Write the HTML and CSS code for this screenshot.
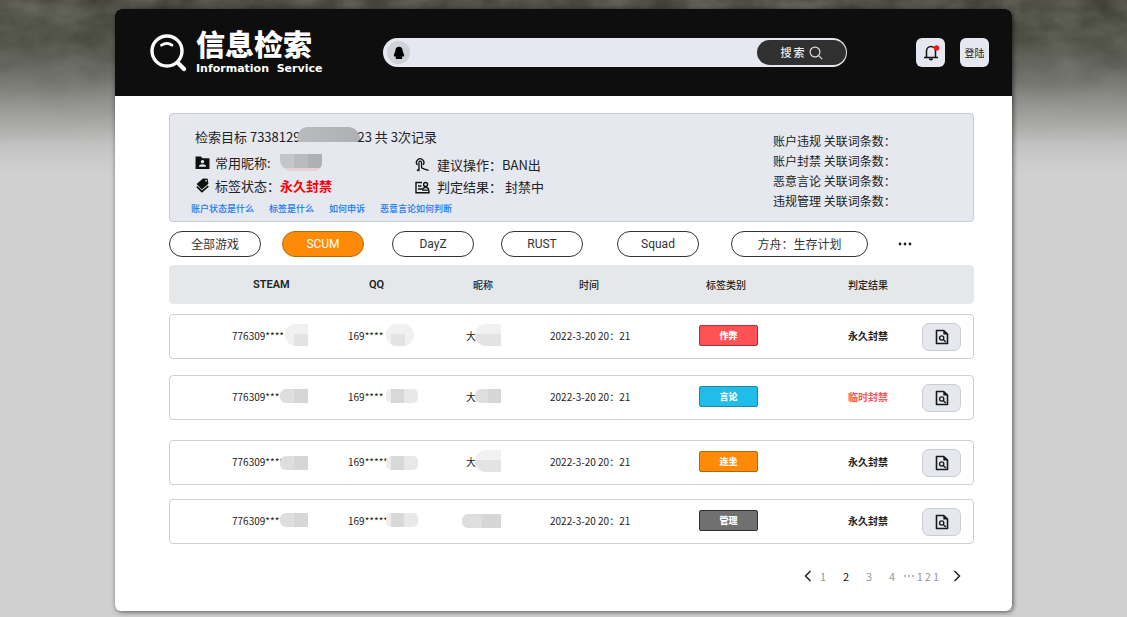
FILE: index.html
```html
<!DOCTYPE html>
<html lang="zh-CN">
<head>
<meta charset="utf-8">
<title>信息检索</title>
<link rel="stylesheet" href="styles.css">
</head>
<body>
<svg class="backdrop" aria-hidden="true">
  <defs>
    <filter id="ground" x="0" y="0" width="100%" height="100%" color-interpolation-filters="sRGB">
      <feTurbulence type="fractalNoise" baseFrequency="0.025 0.04" numOctaves="4" seed="8"/>
      <feColorMatrix values="0.3 0 0 0 0.18  0.3 0 0 0 0.18  0.3 0 0 0 0.14  0 0 0 0 1"/>
    </filter>
    <linearGradient id="fade" x1="0" y1="0" x2="0" y2="1">
      <stop offset="0" stop-color="#fff" stop-opacity=".8"/>
      <stop offset=".3" stop-color="#fff" stop-opacity=".45"/>
      <stop offset=".6" stop-color="#fff" stop-opacity=".12"/>
      <stop offset="1" stop-color="#fff" stop-opacity="0"/>
    </linearGradient>
    <mask id="ground-mask"><rect width="100%" height="160" fill="url(#fade)"/></mask>
  </defs>
  <rect width="100%" height="160" filter="url(#ground)" mask="url(#ground-mask)"/>
</svg>

<div class="card">
  <header class="header">
    <div class="brand">
      <svg class="brand-icon" viewBox="0 0 37 38" fill="none" stroke="#fff">
        <circle cx="17" cy="17" r="15" stroke-width="3.4"/>
        <path d="M27.5 28.500 34 35" stroke-width="4.200" stroke-linecap="round"/>
        <path d="M11.500 11.200q5.500-3.600 10.500 0" stroke-width="2.800" stroke-linecap="round"/>
      </svg>
      <div>
        <h1 class="brand-name">信息检索</h1>
        <p class="brand-sub">Information&nbsp; Service</p>
      </div>
    </div>
    <form class="search">
      <span class="search-kind">
        <svg width="12" height="14" viewBox="0 0 12 14"><path d="M6 .8c2.500 0 3.700 1.800 3.700 4.200 0 1.200 1.500 2.800 1.500 4.800 0 .9-.7 1-1.400.2-.1.900-.5 1.400-.9 1.800.6.400.6 1.200-.2 1.200H3.300c-.8 0-.8-.8-.2-1.200-.4-.4-.8-.9-.9-1.800-.7.800-1.400.7-1.400-.2 0-2 1.500-3.600 1.500-4.800C2.300 2.600 3.500.8 6 .8Z"/></svg>
      </span>
      <input class="search-input" type="text" aria-label="搜索">
      <button class="search-button" type="button">
        <span class="search-label">搜索</span>
        <svg width="14" height="14" viewBox="0 0 14 14" fill="none" stroke="#ddd" stroke-width="1.200"><circle cx="6" cy="6" r="4.900"/><path d="m9.600 9.600 3.600 3.600"/></svg>
      </button>
    </form>
    <div class="actions">
      <button class="action" type="button" aria-label="通知">
        <svg width="18" height="18" viewBox="0 0 18 18" fill="none" stroke="#111" stroke-width="1.500">
          <path d="M4.500 13.500V7a4.500 4.500 0 0 1 9 0v6.500M2 13.600h14"/>
          <path d="M6.800 14.600a2.200 2 0 0 0 4.400 0Z" fill="#111" stroke="none"/>
          <circle cx="14.600" cy="4" r="2.700" fill="#f5151b" stroke="none"/>
        </svg>
      </button>
      <button class="action" type="button">登陆</button>
    </div>
  </header>

  <main class="content">
    <section class="panel">
      <div class="panel-main">
        <p class="target">检索目标 7338129<span class="target-mask"></span>23 共 3次记录</p>
        <div class="facts">
          <ul class="fact-list">
            <li class="fact">
              <svg class="fact-icon" viewBox="0 0 14 14"><path fill="#111" fill-rule="evenodd" d="M.5 1.500h5l1.500 1.500h6.500v10H.5ZM7 4.600a1.600 1.600 0 1 0 .01 0ZM3.800 11h6.400V9.800Q7 7.600 3.800 9.800Z"/></svg>
              <span>常用昵称:</span><span class="name-mask"></span>
            </li>
            <li class="fact">
              <svg class="fact-icon" viewBox="0 0 14 16"><path fill="#111" d="M7.500.5 12.500.8 13.300 6 6.300 12.200.7 6.500Z"/><path d="M1 9.300 6.400 14.500 13.200 8.600" fill="none" stroke="#111" stroke-width="1.800"/><circle cx="10.800" cy="3" r=".9" fill="#e5e8ef"/></svg>
              <span>标签状态：</span><strong class="banned">永久封禁</strong>
            </li>
          </ul>
          <ul class="fact-list fact-list-end">
            <li class="fact">
              <svg class="fact-icon" viewBox="0 0 15 16" fill="none" stroke="#111" stroke-width="1.400"><path d="M2.200 7.500A3.900 3.900 0 1 1 8 7.300"/><path d="M3.700 14V4.800a1.400 1.400 0 0 1 2.800 0v5.600l3.200 1.400 4.300 1.400"/><path d="m3.700 12-2.200 1.500"/></svg>
              <span>建议操作：</span><span>BAN出</span>
            </li>
            <li class="fact">
              <svg class="fact-icon" viewBox="0 0 15 14" fill="none" stroke="#111" stroke-width="1.400"><path d="M7 2H1v10.300h13V10M3 5.500h3.500M3 8.500h4"/><circle cx="10.600" cy="4" r="2"/><path d="M7.800 9.600V8.300q2.800-3 5.700 0v1.300Z"/></svg>
              <span>判定结果：</span><span class="verdict">封禁中</span>
            </li>
          </ul>
        </div>
        <nav class="help">
          <a href="#">账户状态是什么</a><a href="#">标签是什么</a><a href="#">如何申诉</a><a href="#">恶意言论如何判断</a>
        </nav>
      </div>
      <ul class="counts">
        <li>账户违规 关联词条数：</li>
        <li>账户封禁 关联词条数：</li>
        <li>恶意言论 关联词条数：</li>
        <li>违规管理 关联词条数：</li>
      </ul>
    </section>

    <div class="filters">
      <button class="pill pill-wide" type="button">全部游戏</button>
      <button class="pill pill-active" type="button">SCUM</button>
      <button class="pill" type="button">DayZ</button>
      <button class="pill" type="button">RUST</button>
      <button class="pill" type="button">Squad</button>
      <button class="pill pill-long" type="button">方舟：生存计划</button>
      <button class="more" type="button" aria-label="更多"><svg width="14" height="4" viewBox="0 0 14 4" fill="#222"><circle cx="2" cy="2" r="1.400"/><circle cx="7" cy="2" r="1.400"/><circle cx="12" cy="2" r="1.400"/></svg></button>
    </div>

    <svg class="sprite" aria-hidden="true">
      <symbol id="inspect" viewBox="0 0 14 16"><path d="M1.500 1.500h7.200l3.800 3.600v9.400h-11Z" fill="none" stroke="#16191d" stroke-width="1.600" stroke-linejoin="round"/><path d="M8.300 1v4.500h4.500Z" fill="#16191d"/><circle cx="6.700" cy="9" r="2.100" fill="none" stroke="#16191d" stroke-width="1.400"/><path d="m8.200 10.500 2.600 2.600" stroke="#16191d" stroke-width="1.400"/></symbol>
    </svg>

    <table class="records">
      <thead>
        <tr class="head">
          <th>STEAM</th><th>QQ</th><th>昵称</th><th>时间</th><th>标签类别</th><th>判定结果</th>
        </tr>
      </thead>
      <tbody>
        <tr class="record">
          <td>776309****<span class="blot blot-steam blot-tall"></span></td>
          <td>169****<span class="blot blot-qq blot-tall"></span></td>
          <td>大<span class="blot blot-name blot-tall"></span></td>
          <td>2022-3-20 20：21</td>
          <td><span class="tag tag-cheat">作弊</span></td>
          <td class="result">永久封禁</td>
          <td><button class="inspect" type="button" aria-label="查看"><svg width="14" height="16"><use href="#inspect"/></svg></button></td>
        </tr>
        <tr class="record">
          <td>776309****<span class="blot blot-steam"></span></td>
          <td>169****<span class="blot blot-qq"></span></td>
          <td>大<span class="blot blot-name"></span></td>
          <td>2022-3-20 20：21</td>
          <td><span class="tag tag-speech">言论</span></td>
          <td class="result result-temp">临时封禁</td>
          <td><button class="inspect" type="button" aria-label="查看"><svg width="14" height="16"><use href="#inspect"/></svg></button></td>
        </tr>
        <tr class="record">
          <td>776309****<span class="blot blot-steam blot-low"></span></td>
          <td>169*****<span class="blot blot-qq blot-low"></span></td>
          <td>大<span class="blot blot-name blot-tall"></span></td>
          <td>2022-3-20 20：21</td>
          <td><span class="tag tag-linked">连坐</span></td>
          <td class="result">永久封禁</td>
          <td><button class="inspect" type="button" aria-label="查看"><svg width="14" height="16"><use href="#inspect"/></svg></button></td>
        </tr>
        <tr class="record">
          <td>776309****<span class="blot blot-steam"></span></td>
          <td>169*****<span class="blot blot-qq"></span></td>
          <td><span class="blot blot-full"></span></td>
          <td>2022-3-20 20：21</td>
          <td><span class="tag tag-admin">管理</span></td>
          <td class="result">永久封禁</td>
          <td><button class="inspect" type="button" aria-label="查看"><svg width="14" height="16"><use href="#inspect"/></svg></button></td>
        </tr>
      </tbody>
    </table>

    <nav class="pager" aria-label="分页">
      <a href="#" aria-label="上一页"><svg width="8" height="12" viewBox="0 0 8 12" fill="none" stroke="#222" stroke-width="1.500"><path d="M6.500 1 1.500 6l5 5"/></svg></a>
      <a class="page" href="#">1</a>
      <a class="page page-current" href="#">2</a>
      <a class="page" href="#">3</a>
      <a class="page" href="#">4</a>
      <span class="page-gap"><svg width="10" height="2" viewBox="0 0 10 2" fill="#999"><circle cx="1" cy="1" r=".9"/><circle cx="5" cy="1" r=".9"/><circle cx="9" cy="1" r=".9"/></svg></span>
      <a class="page-last" href="#">121</a>
      <a href="#" aria-label="下一页"><svg width="8" height="12" viewBox="0 0 8 12" fill="none" stroke="#222" stroke-width="1.500"><path d="m1.500 1 5 5-5 5"/></svg></a>
    </nav>
  </main>
</div>
</body>
</html>
```

FILE: styles.css
```css
* {
  box-sizing: border-box;
}

body {
  margin: 0;
  min-height: 100vh;
  padding: 9px 115px 5px;
  background: #d0d0d0 linear-gradient(#4c4d43 0, #55564e 40px, #80817c 80px, #a6a6a3 115px, #c6c6c6 145px, #d0d0d0 175px) no-repeat;
  color: #222;
  font-family: "Noto Sans CJK SC", sans-serif;
  font-size: 10px;
}

h1,
p,
ul {
  margin: 0;
  padding: 0;
  list-style: none;
}

button {
  padding: 0;
  border: 0;
  color: inherit;
  font: inherit;
  cursor: pointer;
}

a {
  color: inherit;
  text-decoration: none;
}

svg {
  display: block;
}

.backdrop {
  position: absolute;
  inset: 0;
  z-index: -1;
  width: 100%;
  height: 160px;
}

.sprite {
  position: absolute;
  width: 0;
  height: 0;
}

.card {
  border-radius: 6px;
  background: #fff;
  box-shadow: 1px 1px 5px rgba(0, 0, 0, .6);
  overflow: hidden;
}

.header {
  display: flex;
  align-items: center;
  height: 87px;
  padding: 0 23px 0 35px;
  background: #0e0e0e;
}

.brand {
  display: flex;
  flex: none;
  align-items: center;
  gap: 9px;
  width: 233px;
  color: #fff;
}

.brand-icon {
  width: 37px;
  height: 38px;
}

.brand-name {
  font-size: 29px;
  font-weight: 900;
  line-height: 26px;
}

.brand-sub {
  margin-top: 6px;
  font-family: "DejaVu Sans", sans-serif;
  font-size: 11px;
  font-weight: 700;
  line-height: 14px;
  white-space: nowrap;
}

.search {
  display: flex;
  flex: 1;
  align-items: center;
  height: 29px;
  padding: 0 1px 0 4px;
  border-radius: 15px;
  background: #e5e8f0;
}

.search-kind {
  display: grid;
  place-items: center;
  width: 23px;
  height: 23px;
  border-radius: 50%;
  background: #cfd2d7;
}

.search-input {
  flex: 1;
  min-width: 0;
  padding: 0 8px;
  border: 0;
  outline: 0;
  background: none;
  font: inherit;
}

.search-button {
  display: flex;
  align-items: center;
  justify-content: center;
  gap: 2px;
  width: 89px;
  height: 25px;
  border-radius: 13px;
  background: #303030;
  color: #eee;
  font-size: 11px;
  font-weight: 500;
}

.search-label {
  padding-bottom: 1px;
  letter-spacing: 2px;
}

.actions {
  display: flex;
  gap: 15px;
  margin-left: 69px;
}

.action {
  display: grid;
  place-items: center;
  width: 29px;
  height: 29px;
  border-radius: 6px;
  background: #e5e8f0;
}

.content {
  padding: 17px 38px 25px 54px;
}

.panel {
  display: flex;
  justify-content: space-between;
  padding: 13px 86px 6px 21px;
  border: 1px solid #c8cbd0;
  border-radius: 4px;
  background: #e5e8ef;
  font-size: 13px;
}

.target {
  display: flex;
  margin-bottom: 4px;
  padding-left: 4px;
  line-height: 20px;
  white-space: pre;
}

.target-mask {
  width: 62px;
  height: 15px;
  margin: 0 -3px 0 -2px;
  border-radius: 9px 12px 0 0;
  background: linear-gradient(90deg, #b8babd, #aeb0b3);
}

.facts {
  display: flex;
  padding-left: 4px;
}

.fact-list {
  width: 220px;
  line-height: 23px;
}

.fact-list-end {
  padding-top: 3px;
  line-height: 22px;
}

.fact {
  display: flex;
  align-items: center;
}

.fact-icon {
  width: 15px;
  height: 15px;
  margin-right: 5px;
}

.fact-list-end .fact-icon {
  margin-right: 7px;
}

.name-mask {
  width: 42px;
  height: 17px;
  margin-left: 9px;
  border-radius: 0 0 8px 12px;
  background: linear-gradient(90deg, #c4c6c9 14px, #b9bbbe 14px 28px, #aeb0b3 28px) top / 100% 14px no-repeat #e9cfd4;
}

.banned {
  color: #fb0007;
}

.verdict {
  margin-left: 3px;
}

.help {
  display: flex;
  gap: 15px;
  margin-top: 5px;
  color: #1677f2;
  font-size: 9px;
  font-weight: 500;
  line-height: 12px;
}

.counts {
  padding-top: 4px;
  font-size: 12px;
  line-height: 20px;
  white-space: nowrap;
}

.counts li {
  width: 114px;
}

.filters {
  display: grid;
  grid-template-columns: 113fr 110fr 109fr 116fr 114fr 167fr 76fr;
  align-items: center;
  margin-top: 9px;
  font-family: Roboto, "Noto Sans CJK SC", sans-serif;
  font-size: 12px;
}

.pill {
  width: 82px;
  height: 26px;
  padding-bottom: 1px;
  border: 1px solid #333;
  border-radius: 13px;
  background: #fff;
  color: #333;
}

.pill-wide {
  width: 92px;
}

.pill-long {
  width: 137px;
}

.pill-active {
  border-color: #b36b12;
  background: #ff8a07;
  color: #fff;
}

.more {
  justify-self: start;
  background: none;
}

.records {
  display: block;
  margin-top: 8px;
}

.records thead,
.records tbody {
  display: block;
}

.head,
.record {
  display: grid;
  grid-template-columns: 116fr 118fr 84fr 149fr 149fr 74fr 39px;
  align-items: center;
  padding: 0 12px 0 62px;
  border: 1px solid #cdcfd1;
  border-radius: 4px;
}

.head {
  height: 39px;
  border-color: #e4e8ea;
  background: #e4e8ea;
  font-family: Roboto, "Noto Sans CJK SC", sans-serif;
}

.head th {
  padding: 0 0 1px 7px;
  font-size: 10px;
  font-weight: 500;
  text-align: left;
  white-space: nowrap;
}

.head th:nth-child(-n+2) {
  padding-left: 21px;
  font-size: 11px;
  font-weight: 600;
}

.head th:nth-child(4) {
  padding-left: 29px;
}

.head th:nth-child(6) {
  padding-left: 0;
}

.record {
  height: 45px;
  margin-top: 16px;
}

.record:nth-child(1) {
  margin-top: 10px;
}

.record:nth-child(3) {
  margin-top: 20px;
}

.record:nth-child(4) {
  margin-top: 14px;
}

.record td {
  position: relative;
  padding: 0 0 2px;
  white-space: nowrap;
}

.record td:last-child {
  padding: 0;
}

.blot {
  position: absolute;
  top: 0;
  height: 14px;
  background: linear-gradient(90deg, #dedede 50%, #d6d6d6 50%);
}

.blot-steam {
  left: 48px;
  width: 28px;
  border-radius: 6px 0 0 6px;
}

.blot-qq {
  left: 38px;
  width: 32px;
  border-radius: 5px;
  background: linear-gradient(90deg, #eee 5px, #d8d8d8 5px 18px, #e8e8e8 18px);
}

.blot-name {
  left: 9px;
  width: 26px;
  border-radius: 6px 0 0 6px;
}

.blot-full {
  top: -7px;
  left: -4px;
  width: 39px;
  border-radius: 6px 0 0 6px;
}

.blot-tall {
  top: -4px;
  height: 22px;
  border-radius: 11px 0 0 11px;
  background: linear-gradient(#f1f1f1 45%, #e3e3e3 45%);
}

.blot-steam.blot-tall {
  left: 53px;
  width: 23px;
  background: linear-gradient(#e3e3e3, #e3e3e3) right bottom / 14px 12px no-repeat #f1f1f1;
}

.blot-qq.blot-tall {
  width: 28px;
  border-radius: 11px;
  background: linear-gradient(#e3e3e3, #e3e3e3) 5px 100% / 14px 12px no-repeat #f1f1f1;
}

.blot-low {
  top: 2px;
}

.tag {
  display: grid;
  place-items: center;
  width: 59px;
  height: 21px;
  border: 1px solid;
  border-radius: 2px;
  color: #fff;
  font-size: 9px;
  font-weight: 900;
}

.tag-cheat {
  border-color: #a93238;
  background: #ff5254;
}

.tag-speech {
  border-color: #2486a0;
  background: #20bdea;
}

.tag-linked {
  border-color: #b3660d;
  background: #ff8a07;
}

.tag-admin {
  border-color: #2f2f2f;
  background: #707070;
}

.result {
  font-weight: 700;
}

.result-temp {
  color: #ff5557;
}

.inspect {
  display: grid;
  place-items: center;
  width: 39px;
  height: 28px;
  border: 1px solid #c9ccd2;
  border-radius: 7px;
  background: #e5e8ef;
}

.pager {
  display: flex;
  align-items: center;
  justify-content: flex-end;
  margin-top: 22px;
  padding-right: 13px;
  color: #999;
  font-size: 11px;
  line-height: 20px;
}

.page {
  width: 23px;
  text-align: center;
}

.page-current {
  color: #111;
}

.page-last {
  margin: 0 12px 0 3px;
  letter-spacing: 2px;
}
```
